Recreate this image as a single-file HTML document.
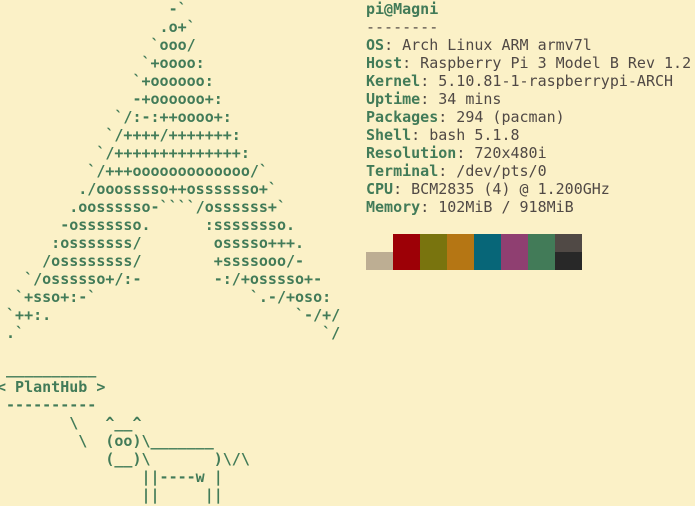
<!DOCTYPE html>
<html><head><meta charset="utf-8"><style>
html,body{margin:0;padding:0;background:#fbf1c7;width:695px;height:506px;overflow:hidden}
pre{margin:0;position:absolute;top:0;font-family:"DejaVu Sans Mono","Liberation Mono",monospace;font-size:15px;line-height:18px;color:#504945}
.g{color:#427b58;font-weight:bold}
#logo{left:-3px}
#info{left:366px}
.b{display:inline-block;width:27px;height:18px;vertical-align:top}
</style></head><body>
<pre id="logo" class="g">                   -&#96;
                  .o+&#96;
                 &#96;ooo/
                &#96;+oooo:
               &#96;+oooooo:
               -+oooooo+:
             &#96;/:-:++oooo+:
            &#96;/++++/+++++++:
           &#96;/++++++++++++++:
          &#96;/+++ooooooooooooo/&#96;
         ./ooosssso++osssssso+&#96;
        .oossssso-&#96;&#96;&#96;&#96;/ossssss+&#96;
       -osssssso.      :ssssssso.
      :osssssss/        osssso+++.
     /ossssssss/        +ssssooo/-
   &#96;/ossssso+/:-        -:/+osssso+-
  &#96;+sso+:-&#96;                 &#96;.-/+oso:
 &#96;++:.                           &#96;-/+/
 .&#96;                                 &#96;/

 __________
&lt; PlantHub &gt;
 ----------
        \   ^__^
         \  (oo)\_______
            (__)\       )\/\
                ||----w |
                ||     ||</pre>
<pre id="info"><span class="g">pi@Magni</span>
--------
<span class="g">OS</span>: Arch Linux ARM armv7l
<span class="g">Host</span>: Raspberry Pi 3 Model B Rev 1.2
<span class="g">Kernel</span>: 5.10.81-1-raspberrypi-ARCH
<span class="g">Uptime</span>: 34 mins
<span class="g">Packages</span>: 294 (pacman)
<span class="g">Shell</span>: bash 5.1.8
<span class="g">Resolution</span>: 720x480i
<span class="g">Terminal</span>: /dev/pts/0
<span class="g">CPU</span>: BCM2835 (4) @ 1.200GHz
<span class="g">Memory</span>: 102MiB / 918MiB

<span class="b" style="background:#fbf1c7"></span><span class="b" style="background:#9d0006"></span><span class="b" style="background:#79740e"></span><span class="b" style="background:#b57614"></span><span class="b" style="background:#076678"></span><span class="b" style="background:#8f3f71"></span><span class="b" style="background:#427b58"></span><span class="b" style="background:#504945"></span>
<span class="b" style="background:#bdae93"></span><span class="b" style="background:#9d0006"></span><span class="b" style="background:#79740e"></span><span class="b" style="background:#b57614"></span><span class="b" style="background:#076678"></span><span class="b" style="background:#8f3f71"></span><span class="b" style="background:#427b58"></span><span class="b" style="background:#282828"></span></pre>
</body></html>
